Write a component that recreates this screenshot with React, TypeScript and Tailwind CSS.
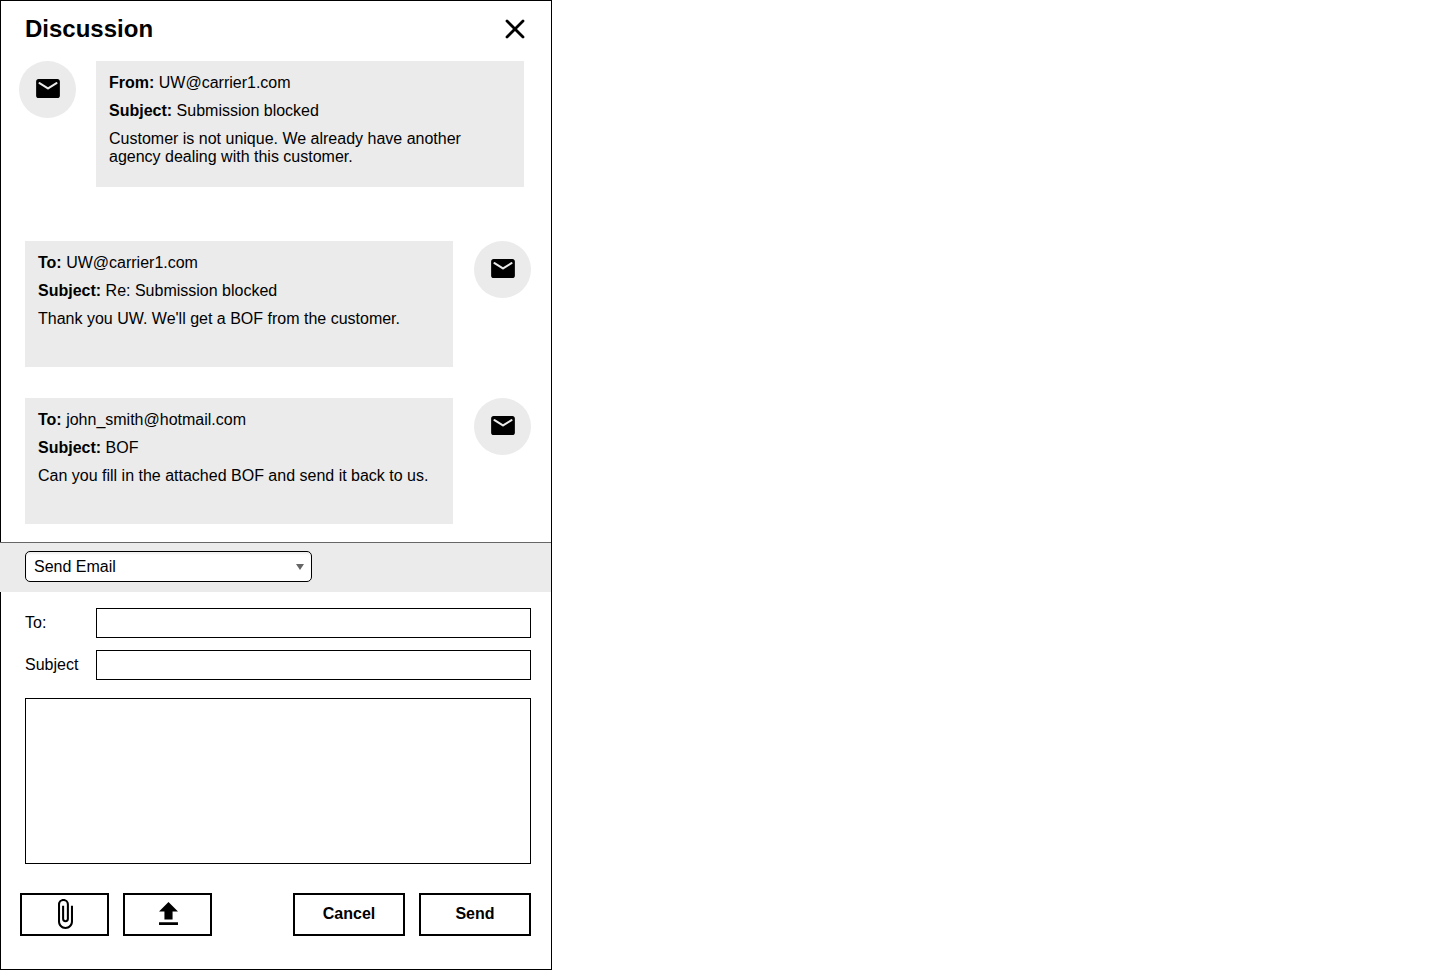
import React, { useState } from "react";

type Message = {
  id: number;
  direction: "incoming" | "outgoing";
  address: string;
  subject: string;
  body: string;
};

const messages: Message[] = [
  {
    id: 1,
    direction: "incoming",
    address: "UW@carrier1.com",
    subject: "Submission blocked",
    body: "Customer is not unique. We already have another agency dealing with this customer.",
  },
  {
    id: 2,
    direction: "outgoing",
    address: "UW@carrier1.com",
    subject: "Re: Submission blocked",
    body: "Thank you UW. We'll get a BOF from the customer.",
  },
  {
    id: 3,
    direction: "outgoing",
    address: "john_smith@hotmail.com",
    subject: "BOF",
    body: "Can you fill in the attached BOF and send it back to us.",
  },
];

function MailBadge() {
  return (
    <span className="flex size-[57px] shrink-0 items-center justify-center rounded-full bg-[#ebebeb] pb-[3px]">
      <svg viewBox="2 4 20 16" className="h-[19px] w-6" fill="currentColor" aria-hidden="true">
        <path d="M20 4H4c-1.1 0-2 .9-2 2v12c0 1.1.9 2 2 2h16c1.1 0 2-.9 2-2V6c0-1.1-.9-2-2-2zm-.4 4.25-7.07 4.42c-.32.2-.74.2-1.06 0L4.4 8.25a.85.85 0 1 1 .9-1.44L12 11l6.7-4.19a.85.85 0 1 1 .9 1.44z" />
      </svg>
    </span>
  );
}

function MessageItem({ message }: { message: Message }) {
  const incoming = message.direction === "incoming";
  return (
    <li
      className={
        incoming
          ? "mb-[54px] flex items-start gap-5 pr-[27px] pl-[18px]"
          : "mb-[31px] flex flex-row-reverse items-start gap-[21px] pr-5 pl-6 last:mb-[18px]"
      }
    >
      <MailBadge />
      <article className="flex min-h-[126px] min-w-0 flex-1 flex-col gap-[10px] bg-[#ebebeb] p-[13px]">
        <p>
          <strong>{incoming ? "From:" : "To:"}</strong> {message.address}
        </p>
        <p>
          <strong>Subject:</strong> {message.subject}
        </p>
        <p>{message.body}</p>
      </article>
    </li>
  );
}

export default function App() {
  const [action, setAction] = useState("Send Email");

  return (
    <main className="flex min-h-screen w-full max-w-[552px] flex-col border border-black bg-white font-['Liberation_Sans',Arial,sans-serif] text-base leading-[18px] text-black">
      <header className="flex items-center justify-between pt-[14px] pr-[26px] pb-[18px] pl-6">
        <h1 className="text-2xl leading-7 font-bold">Discussion</h1>
        <button type="button" aria-label="Close">
          <svg viewBox="0 0 20 20" className="block size-5" fill="none" stroke="currentColor" strokeWidth="2.8" strokeLinecap="round" aria-hidden="true">
            <path d="M2 2 18 18M18 2 2 18" />
          </svg>
        </button>
      </header>

      <ul>
        {messages.map((message) => (
          <MessageItem key={message.id} message={message} />
        ))}
      </ul>

      <div className="-ml-px border-t border-[#666666] bg-[#ebebeb] pt-2 pb-[10px] pl-[25px]">
        <div className="relative w-[287px]">
          <select
            aria-label="Action"
            value={action}
            onChange={(event) => setAction(event.target.value)}
            className="block h-[31px] w-full appearance-none rounded-[5px] border border-black bg-white px-2 shadow-[inset_0_2px_2px_rgba(0,0,0,0.06)]"
          >
            <option>Send Email</option>
          </select>
          <svg viewBox="0 0 8 6" className="pointer-events-none absolute top-[13px] right-2 h-[6px] w-2" fill="#666666" aria-hidden="true">
            <path d="M0 0h8L4 6z" />
          </svg>
        </div>
      </div>

      <form className="flex flex-1 flex-col pt-4 pr-5 pb-[33px] pl-6" onSubmit={(event) => event.preventDefault()}>
        <div className="flex flex-col gap-3">
          <div className="flex items-center">
            <label htmlFor="to" className="w-[71px] shrink-0">
              To:
            </label>
            <input id="to" type="text" className="h-[30px] min-w-0 flex-1 border border-black px-2" />
          </div>
          <div className="flex items-center">
            <label htmlFor="subject" className="w-[71px] shrink-0">
              Subject
            </label>
            <input id="subject" type="text" className="h-[30px] min-w-0 flex-1 border border-black px-2" />
          </div>
        </div>

        <textarea aria-label="Message" className="mt-[18px] block min-h-[166px] w-full flex-1 resize-none border border-black p-2" />

        <div className="mt-[29px] -ml-[5px] flex justify-between">
          <div className="flex gap-[14px]">
            <button type="button" aria-label="Attach file" className="flex h-[43px] w-[89px] items-center justify-center border-2 border-black pb-px pl-[2px]">
              <svg viewBox="7 1 11 22" className="h-[30px] w-[15px]" fill="currentColor" aria-hidden="true">
                <path d="M16.5 6v11.5c0 2.21-1.79 4-4 4s-4-1.79-4-4V5a2.5 2.5 0 0 1 5 0v10.5c0 .55-.45 1-1 1s-1-.45-1-1V6H10v9.5a2.5 2.5 0 0 0 5 0V5c0-2.21-1.79-4-4-4S7 2.79 7 5v12.5c0 3.04 2.46 5.5 5.5 5.5s5.5-2.46 5.5-5.5V6h-1.5z" />
              </svg>
            </button>
            <button type="button" aria-label="Upload" className="flex h-[43px] w-[89px] items-center justify-center border-2 border-black pb-[2px] pl-px">
              <svg viewBox="5 3 14 17" className="h-[23px] w-[19px]" fill="currentColor" aria-hidden="true">
                <path d="M9 16h6v-6h4l-7-7-7 7h4zm-4 2h14v2H5z" />
              </svg>
            </button>
          </div>
          <div className="flex gap-[14px]">
            <button type="button" className="h-[43px] w-28 border-2 border-black pb-[2px] font-bold">
              Cancel
            </button>
            <button type="submit" className="h-[43px] w-28 border-2 border-black pb-[2px] font-bold">
              Send
            </button>
          </div>
        </div>
      </form>
    </main>
  );
}
